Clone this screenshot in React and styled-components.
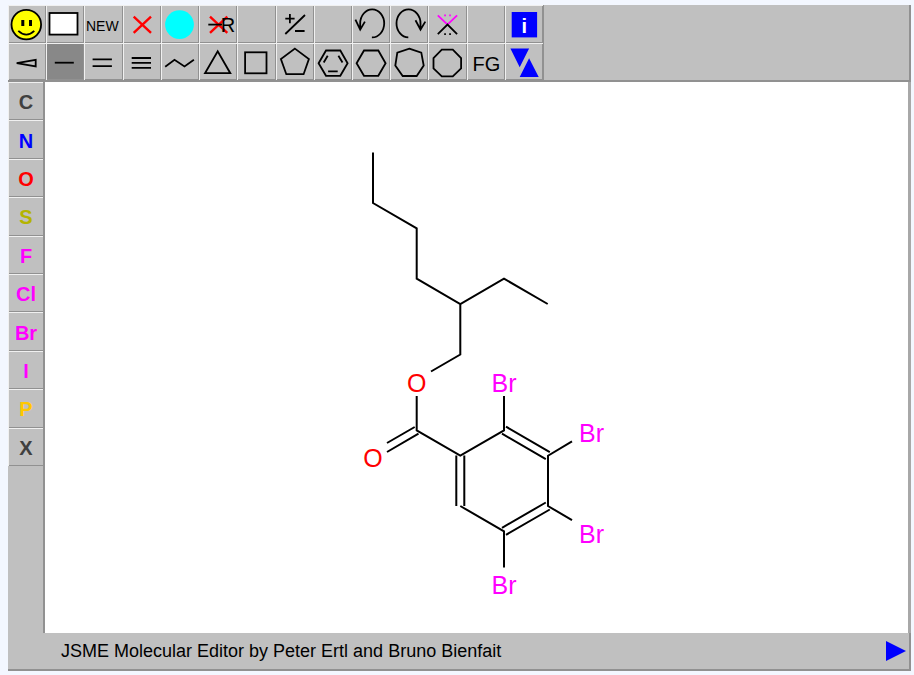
import React, { useState } from "react";
import styled, { createGlobalStyle } from "styled-components";

const Global = createGlobalStyle`
  * { box-sizing: border-box; }
  body {
    margin: 0;
    background: #f3f7ff;
    font-family: "Liberation Sans", Arial, sans-serif;
    color: #000;
  }
`;

const Page = styled.main`
  display: flex;
  min-height: 100vh;
  padding: 5px 3px 4px 8px;
`;

const Editor = styled.section`
  display: flex;
  flex-direction: column;
  flex: 1;
  background: #c0c0c0;
  border-bottom: 2px solid #919191;
`;

const Toolbar = styled.div`
  display: flex;
  border-right: 2px solid #919191;
  border-bottom: 2px solid #919191;
`;

const ToolGrid = styled.div`
  display: grid;
  grid-template-columns: repeat(14, 1fr);
  grid-template-rows: 38px 37px;
  width: 536px;
  border-right: 1px solid #919191;
`;

const ToolButton = styled.button`
  display: flex;
  overflow: hidden;
  padding: 0;
  border: 0;
  background: ${(p) => (p.$active ? "#888888" : "#c0c0c0")};
  box-shadow: inset 1px 1px #f0f0f0, inset -1px -1px #919191;
  cursor: pointer;
`;

const Glyph = styled.svg`
  flex: none;
  width: 38px;
  height: 38px;
  fill: none;
  stroke: #000;
  stroke-width: 1.8;
`;

const GlyphText = styled.text`
  fill: ${(p) => p.$color || "#000"};
  stroke: none;
  text-anchor: middle;
  font-size: ${(p) => (p.$small ? "14px" : "20px")};
  font-weight: ${(p) => (p.$bold ? "bold" : "normal")};
`;

const Body = styled.div`
  display: flex;
  flex: 1;
`;

const Sidebar = styled.div`
  display: grid;
  grid-template-columns: 35px;
  grid-template-rows: repeat(10, 1fr);
  align-self: flex-start;
  height: 384px;
`;

const AtomButton = styled.button`
  padding: 3px 0 0 1px;
  border: 0;
  background: #c0c0c0;
  box-shadow: inset 1px 1px #f0f0f0, inset 0 -1px #919191;
  color: ${(p) => p.$color};
  font: bold 20px "Liberation Sans", Arial, sans-serif;
  cursor: pointer;
`;

const Workspace = styled.div`
  display: flex;
  flex-direction: column;
  flex: 1;
`;

const Canvas = styled.div`
  display: flex;
  flex: 1;
  background: #fff;
  border-left: 2px solid #919191;
  border-right: 3px solid #a8a8a8;
`;

const Molecule = styled.svg`
  flex: 1;
  width: 100%;
  fill: none;
  stroke: #000;
  stroke-width: 2;
`;

const AtomLabel = styled.text`
  fill: ${(p) => p.$color};
  stroke: none;
  text-anchor: middle;
  font-size: 25px;
`;

const StatusBar = styled.footer`
  display: flex;
  align-items: center;
  justify-content: space-between;
  height: 36px;
  padding: 0 3px 0 18px;
  border-right: 2px solid #919191;
  font-size: 18px;
`;

const MenuButton = styled.button`
  display: flex;
  padding: 0;
  border: 0;
  background: none;
  cursor: pointer;
`;

const hexagon = "4.6,19.2 12,6.5 26.3,6.5 33.6,19.2 26.3,31.8 12,31.8";

const tools = [
  {
    name: "SMILES",
    icon: (
      <>
        <circle cx="18.3" cy="18.6" r="14.8" fill="#ff0" />
        <path d="M13.3 13.9h3v6h-3zM21 13.9h3v6h-3z" fill="#000" stroke="none" />
        <path d="M10.3 24.8Q18.3 32.4 26.3 24.8" />
      </>
    ),
  },
  { name: "Clear", icon: <rect x="3.5" y="7" width="28" height="21.6" fill="#fff" /> },
  { name: "New molecule", icon: <GlyphText x="18.3" y="25" $small>NEW</GlyphText> },
  { name: "Delete", icon: <path d="M10.7 10.6L28 26.8M28 10.6L10.7 26.8" stroke="#f00" strokeWidth="2.4" /> },
  { name: "Color", icon: <circle cx="18.5" cy="18.6" r="14.4" fill="#0ff" stroke="none" /> },
  {
    name: "Delete group",
    icon: (
      <>
        <path d="M11 10.6L28.3 26.8M28.3 10.6L11 26.8" stroke="#f00" strokeWidth="2.4" />
        <path d="M9.3 18.6H23" />
        <GlyphText x="29" y="26.4">R</GlyphText>
      </>
    ),
  },
  { name: "Unused tool 1", icon: null },
  { name: "Charge", icon: <path d="M9.3 12.6h9.3M13.9 8v9.3M9.3 28L29 9M19 25h9.6" /> },
  { name: "Unused tool 2", icon: null },
  { name: "Undo", icon: <path d="M19.9 31.4A12 14 0 1 0 8.2 17.5V23.6M3.4 13.6L8.2 23.6L12.9 15.6" /> },
  { name: "Redo", icon: <path d="M18.3 31.4A12 14 0 1 1 30.5 17.5V23.6M25.5 14.3L30.5 23.6L35.3 15.6" /> },
  {
    name: "Spiro",
    icon: (
      <>
        <path d="M9.8 9.3L19.5 18.6L29.1 9.3M16.2 9.3h1.7M21.2 9.3h1.7" stroke="#f0f" />
        <path d="M9.8 28.2L19.5 18.6L29.1 28.2M16.2 28.2h1.7M21.2 28.2h1.7" />
      </>
    ),
  },
  { name: "Unused tool 3", icon: null },
  {
    name: "Information",
    icon: (
      <>
        <rect x="6.7" y="6" width="25.4" height="25.4" fill="#00f" stroke="none" />
        <GlyphText x="19.4" y="27" $color="#fff" $bold>i</GlyphText>
      </>
    ),
  },
  { name: "Stereo bond", icon: <path d="M8.7 19.2L27.7 15.8V22.5Z" /> },
  { name: "Single bond", icon: <path d="M8.8 18.7h19" /> },
  { name: "Double bond", icon: <path d="M8.6 15.4h19.3M8.6 22.2h19.3" /> },
  { name: "Triple bond", icon: <path d="M8.7 14H28M8.7 18.8H28M8.7 23.8H28" /> },
  { name: "Chain", icon: <path d="M4.2 22.8L13.5 15.8L23.5 22.5L32.9 15.8" /> },
  { name: "Three-membered ring", icon: <polygon points="6,29.2 18.7,7.4 31.3,29.2" /> },
  { name: "Four-membered ring", icon: <rect x="8.1" y="8.3" width="21.4" height="21" /> },
  { name: "Five-membered ring", icon: <polygon points="18.9,4.6 32.9,15 27.6,30.2 10.3,30.2 4.9,15" /> },
  {
    name: "Aromatic ring",
    icon: (
      <>
        <polygon points={hexagon} />
        <path d="M9.7 18.5L13.7 11.8M24.4 11.8L28.5 18.5M14.1 27.3h9.6" />
      </>
    ),
  },
  { name: "Six-membered ring", icon: <polygon points={hexagon} /> },
  { name: "Seven-membered ring", icon: <polygon points="19.3,4.6 31.3,8.6 33.7,21.6 26.7,32 12.7,32 5.3,21.6 7.3,8.6" /> },
  { name: "Eight-membered ring", icon: <polygon points="13.8,5.6 24.8,5.6 33.1,14 33.1,24.3 24.8,32.3 13.8,32.3 5.5,24.3 5.5,14" /> },
  { name: "Functional groups", icon: <GlyphText x="19.5" y="27">FG</GlyphText> },
  {
    name: "Copy and paste",
    icon: <path d="M5.4 4.6H24.1L14.7 23.3ZM14.7 33H33.7L24.1 14.3Z" fill="#00f" stroke="none" />,
  },
];

const atoms = [
  ["C", "#404040"],
  ["N", "#0000ff"],
  ["O", "#ff0000"],
  ["S", "#b4b400"],
  ["F", "#ff00ff"],
  ["Cl", "#ff00ff"],
  ["Br", "#ff00ff"],
  ["I", "#ff00ff"],
  ["P", "#ffc800"],
  ["X", "#404040"],
];

const bonds = [
  "M373 152.5V203L416.7 228.3V278.7L460.3 304L504 278.7L547.7 304",
  "M460.3 304V354.5L431 371.5",
  "M416.7 396V430.3L460.3 455.5L504 430.3V396",
  "M387 443L414.7 427M387 452L418.5 433.7",
  "M456.3 455.5V506M464.3 455.5V506",
  "M506 426.7L549.8 452.2M502 433.7L545.8 459.2",
  "M572 441.3L548 455.7V506L572 520.2",
  "M545.8 502.5L502 527.8M549.8 509.5L506 534.8",
  "M460.3 506L504 531.3V567.5",
];

const labels = [
  ["O", 416.7, 391.5, "#ff0000"],
  ["O", 373, 467, "#ff0000"],
  ["Br", 504, 391.5, "#ff00ff"],
  ["Br", 591.5, 442, "#ff00ff"],
  ["Br", 591.5, 543, "#ff00ff"],
  ["Br", 504, 593.5, "#ff00ff"],
];

export default function App() {
  const [active, setActive] = useState("Single bond");
  return (
    <>
      <Global />
      <Page>
        <Editor>
          <Toolbar>
            <ToolGrid role="toolbar" aria-label="Drawing tools">
              {tools.map((t) => (
                <ToolButton
                  key={t.name}
                  type="button"
                  aria-label={t.name}
                  $active={active === t.name}
                  onClick={() => setActive(t.name)}
                >
                  <Glyph viewBox="0 -1 38 38">{t.icon}</Glyph>
                </ToolButton>
              ))}
            </ToolGrid>
          </Toolbar>
          <Body>
            <Sidebar role="toolbar" aria-label="Atoms">
              {atoms.map(([symbol, color]) => (
                <AtomButton key={symbol} type="button" $color={color} onClick={() => setActive(symbol)}>
                  {symbol}
                </AtomButton>
              ))}
            </Sidebar>
            <Workspace>
              <Canvas>
                <Molecule viewBox="45 82 863 551" role="img" aria-label="Molecule drawing">
                  <path d={bonds.join("")} />
                  {labels.map(([symbol, x, y, color]) => (
                    <AtomLabel key={`${x}-${y}`} x={x} y={y} $color={color}>
                      {symbol}
                    </AtomLabel>
                  ))}
                </Molecule>
              </Canvas>
              <StatusBar>
                <span>JSME Molecular Editor by Peter Ertl and Bruno Bienfait</span>
                <MenuButton type="button" aria-label="Open menu">
                  <svg width="20" height="20" viewBox="0 0 20 20">
                    <path d="M0 0L20 10L0 20Z" fill="#00f" />
                  </svg>
                </MenuButton>
              </StatusBar>
            </Workspace>
          </Body>
        </Editor>
      </Page>
    </>
  );
}
